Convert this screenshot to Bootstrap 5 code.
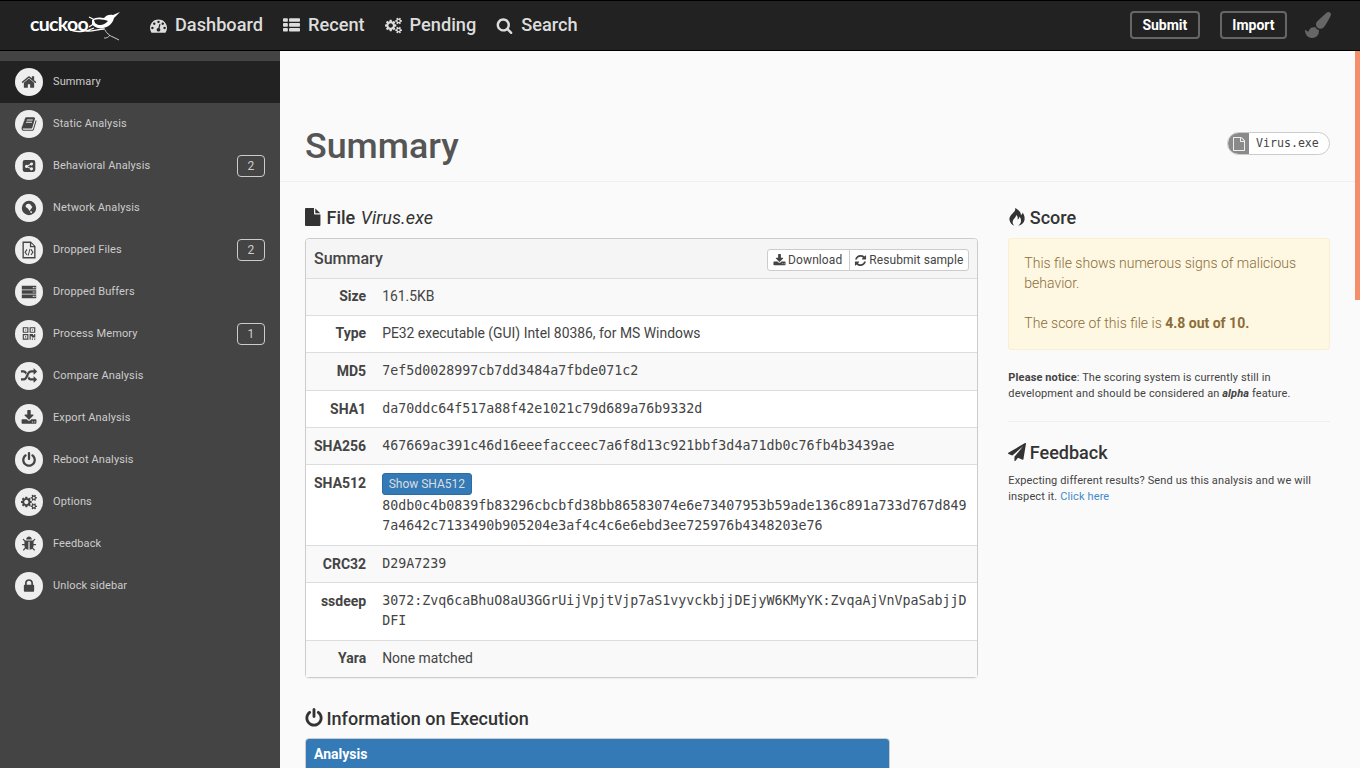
<!DOCTYPE html>
<html lang="en">
<head>
<meta charset="utf-8">
<title>Summary</title>
<link href="https://cdn.jsdelivr.net/npm/bootstrap@5.3.0/dist/css/bootstrap.min.css" rel="stylesheet">
<style>
html,body{height:100%}
body{font-family:Roboto,"Liberation Sans",sans-serif;font-size:14px;line-height:20.3px;color:#444;background:#fafafa;overflow:hidden}
.fa{fill:currentColor;flex:none}
.topbar{height:51px;background:#222;border-top:1px solid #000;border-bottom:1px solid #000;padding:0 29px 1px 30px}
.logo-box{width:92px;height:34px;position:relative;margin-right:28px}
.logo-word{position:absolute;left:0;top:5px;font-family:Lato,"Open Sans",sans-serif;font-weight:700;font-size:19.500px;line-height:22px;letter-spacing:-.7px;color:#fff}
.logo-bird{position:absolute;left:0;top:0}
.top-link{font-size:18.200px;font-weight:500;color:#ddd;text-decoration:none;line-height:24px;margin-right:20px}
.top-link .fa{width:17px;height:17px;margin-right:8px}
.top-btn{font-size:14px;font-weight:700;color:#fff;border:2px solid #666;border-radius:4px;height:28px;line-height:24px;padding:0 10.500px;text-decoration:none;margin-right:20px}
.brush-ic{width:26px;height:26px;color:#666;margin-left:-2px}
.shell{height:717px}
.side{width:280px;flex:none;background:#444;padding-top:10px}
.side-item{height:42px;padding:0 15px;color:#ccc;font-size:11px;letter-spacing:.12px;text-decoration:none}
.side-item.on{background:#222}
.side-disc{width:28px;height:28px;border-radius:50%;background:#eee;color:#444;margin-right:10px;flex:none}
.side-disc .fa{width:16px;height:16px}
.side-disc .fa.ic-tall{width:18px;height:18px}
.side-count{width:28px;height:22px;border:1px solid #ccc;border-radius:4px;color:#ccc;font-size:12px;line-height:20px;text-align:center;margin-left:auto}
.work{position:relative;overflow:hidden;background:#fafafa}
.thumb{position:absolute;right:0;top:0;width:5px;height:249px;background:#f58e6b}
.page-top{height:131px;border-bottom:1px solid #eee;padding:0 30px 0 25px}
.page-title{font-size:35.800px;line-height:40px;font-weight:500;color:#555;margin:0 0 15px}
.file-pill{height:23px;margin-bottom:26px;border:1px solid #ccc;border-radius:12px;background:#fff;overflow:hidden;width:103px;font-family:"DejaVu Sans Mono",monospace;font-size:11.600px;color:#444}
.file-pill-ic{width:21px;height:100%;background:#8a8a8a;color:#eee}
.file-pill-ic .fa{width:14px;height:14px}
.file-pill-tx{padding-left:7px;line-height:21px}
.page-body{padding:25px 30px 0 25px}
.page-body .row{--bs-gutter-x:30px}
.sec-head{font-size:18px;font-weight:500;line-height:22px;color:#333;margin:0 0 9px}
.sec-head em{font-weight:400;margin-left:1px;letter-spacing:.1px}
.sec-head .fa{width:18px;height:18px;margin-top:-4px;margin-right:-1px;vertical-align:middle}
.sec-head .fa.ic-big{width:20px;height:20px;margin-left:-1px;margin-right:-2px;margin-top:-5px}
.sec-head.run-title{margin-bottom:8px}
.sheet{border:1px solid #ccc;border-radius:4px;background:#fff;box-shadow:0 1px 1px rgba(0,0,0,.05);margin-bottom:30px}
.sheet-head{height:39.700px;padding:2px 8px 0;background:#f5f5f5;border-bottom:1px solid #ddd;border-radius:3px 3px 0 0;font-size:16px;font-weight:500;color:#444}
.sheet-head .btn-group{margin-top:2px;--bs-border-radius:3px}
.mini-btn{font-size:12px;line-height:16px;padding:2px 5px;color:#444;background:#fff;border-color:#ccc;--bs-btn-border-radius:3px}
.mini-btn .fa{width:13px;height:13px;margin-top:-2px;margin-right:-1px;vertical-align:middle}
.mini-wide{letter-spacing:.1px;padding-left:5.500px;padding-right:6.500px}
.mini-long{letter-spacing:.07px;padding-left:4.500px}
.facts{margin:0;color:#444;--bs-table-bg:transparent}
.facts tr{border:0}
.facts th,.facts td{padding:8px;border-bottom:1px solid #ddd;line-height:20.3px;box-shadow:none;color:#444;font-size:13.900px}
.facts tr:last-child th,.facts tr:last-child td{border-bottom:0}
.facts tr:nth-child(odd) th,.facts tr:nth-child(odd) td{background:#f9f9f9}
.facts th{width:68px;text-align:right;font-weight:700;white-space:nowrap;font-size:14px}
.facts tr.top-al th{vertical-align:top}
.facts tr.lift th,.facts tr.lift td{padding-top:7px;padding-bottom:9px}
.facts .hashy{font-family:"DejaVu Sans Mono",monospace;font-size:13.300px;word-break:break-all}
.show-btn{background:#337ab7;border:1px solid #2e6da4;color:#ddd;font-family:Roboto,sans-serif;font-size:12px;line-height:18px;padding:1px 5.500px;border-radius:3px;display:block;width:fit-content;text-decoration:none;margin-bottom:1px}
.run-sheet{width:585px;border-radius:4px 4px 0 0;overflow:hidden}
.run-head{height:30px;background:#337ab7;color:#fff;font-size:14px;font-weight:700;line-height:30px;padding:0 8px}
.warn-box{height:112px;background:#fef7e1;border:1px solid #fbeed5;border-radius:3px;color:#8a6d3b;padding:14px 15px;margin-bottom:20px;font-weight:300;line-height:20px}
.warn-box b{font-weight:700}
.fine{font-size:11px;line-height:16px;color:#444;letter-spacing:.12px}
.fine a{color:#428bca;text-decoration:none}
.fine b{font-weight:700}
.rule{border-top:1px solid #eee;opacity:1;margin:19px 0 20px}
</style>
</head>
<body>
<svg width="0" height="0" class="position-absolute">
<defs>
<symbol id="i-home" viewBox="0 0 1792 1792"><path d="M1472 992v480q0 26-19 45t-45 19h-384v-384h-256v384h-384q-26 0-45-19t-19-45v-480q0-1 .5-3t.5-3l575-474 575 474q1 2 1 6zm223-69l-62 74q-8 9-21 11h-3q-13 0-21-7l-692-577-692 577q-12 8-24 7-13-2-21-11l-62-74q-8-10-7-23.5t11-21.5l719-599q32-26 76-26t76 26l244 204v-195q0-14 9-23t23-9h192q14 0 23 9t9 23v408l219 182q10 8 11 21.5t-7 23.5z"/></symbol>
<symbol id="i-file" viewBox="0 0 1792 1792"><path d="M1024 512v-472q22 14 36 28l408 408q14 14 28 36h-472zm-128 32q0 40 28 68t68 28h544v1056q0 40-28 68t-68 28h-1344q-40 0-68-28t-28-68v-1600q0-40 28-68t68-28h800v544z"/></symbol>
<symbol id="i-file-o" viewBox="0 0 1792 1792"><path d="M1596 380q28 28 48 76t20 88v1152q0 40-28 68t-68 28h-1344q-40 0-68-28t-28-68v-1600q0-40 28-68t68-28h896q40 0 88 20t76 48zm-444-244v376h376q-10-29-22-41l-313-313q-12-12-41-22zm384 1528v-1024h-416q-40 0-68-28t-28-68v-416h-768v1536h1280z"/></symbol>
<symbol id="i-power" viewBox="0 0 1792 1792"><path d="M1664 896q0 156-61 298t-164 245-245 164-298 61-298-61-245-164-164-245-61-298q0-182 80.5-343t226.5-270q43-32 95.5-25t83.5 50q32 42 24.5 94.5t-49.5 84.5q-98 74-151.5 181t-53.5 228q0 104 40.5 198.5t109.5 163.5 163.5 109.5 198.5 40.5 198.5-40.5 163.5-109.5 109.5-163.5 40.5-198.5q0-121-53.5-228t-151.5-181q-42-32-49.5-84.5t24.5-94.5q31-43 84-50t95 25q146 109 226.5 270t80.5 343zm-640-768v640q0 52-38 90t-90 38-90-38-38-90v-640q0-52 38-90t90-38 90 38 38 90z"/></symbol>
<symbol id="i-lock" viewBox="0 0 1792 1792"><path d="M640 768h512v-192q0-106-75-181t-181-75-181 75-75 181v192zm832 96v576q0 40-28 68t-68 28h-960q-40 0-68-28t-28-68v-576q0-40 28-68t68-28h32v-192q0-184 132-316t316-132 316 132 132 316v192h32q40 0 68 28t28 68z"/></symbol>
<symbol id="i-download" viewBox="0 0 1792 1792"><path d="M1344 1344q0-26-19-45t-45-19-45 19-19 45 19 45 45 19 45-19 19-45zm256 0q0-26-19-45t-45-19-45 19-19 45 19 45 45 19 45-19 19-45zm128-224v320q0 40-28 68t-68 28h-1472q-40 0-68-28t-28-68v-320q0-40 28-68t68-28h465l135 136q58 56 136 56t136-56l136-136h464q40 0 68 28t28 68zm-325-569q17 41-14 70l-448 448q-18 19-45 19t-45-19l-448-448q-31-29-14-70 17-39 59-39h256v-448q0-26 19-45t45-19h256q26 0 45 19t19 45v448h256q42 0 59 39z"/></symbol>
<symbol id="i-search" viewBox="0 0 1792 1792"><path d="M1216 832q0-185-131.5-316.5t-316.5-131.5-316.5 131.5-131.5 316.5 131.5 316.5 316.5 131.5 316.5-131.5 131.5-316.5zm512 832q0 52-38 90t-90 38q-54 0-90-38l-343-342q-179 124-399 124-143 0-273.5-55.5t-225-150-150-225-55.5-273.5 55.5-273.5 150-225 225-150 273.5-55.5 273.5 55.5 225 150 150 225 55.5 273.5q0 220-124 399l343 343q37 37 37 90z"/></symbol>
<symbol id="i-list" viewBox="0 0 1792 1792"><path d="M512 1248v192q0 40-28 68t-68 28h-320q-40 0-68-28t-28-68v-192q0-40 28-68t68-28h320q40 0 68 28t28 68zm0-512v192q0 40-28 68t-68 28h-320q-40 0-68-28t-28-68v-192q0-40 28-68t68-28h320q40 0 68 28t28 68zm1280 512v192q0 40-28 68t-68 28h-960q-40 0-68-28t-28-68v-192q0-40 28-68t68-28h960q40 0 68 28t28 68zm-1280-1024v192q0 40-28 68t-68 28h-320q-40 0-68-28t-28-68v-192q0-40 28-68t68-28h320q40 0 68 28t28 68zm1280 512v192q0 40-28 68t-68 28h-960q-40 0-68-28t-28-68v-192q0-40 28-68t68-28h960q40 0 68 28t28 68zm0-512v192q0 40-28 68t-68 28h-960q-40 0-68-28t-28-68v-192q0-40 28-68t68-28h960q40 0 68 28t28 68z"/></symbol>
<symbol id="i-random" viewBox="0 0 1792 1792"><path d="M666 481q-60 92-137 273-22-45-37-72.5t-40.5-63.5-51-56.5-63-35-81.5-14.5h-224q-14 0-23-9t-9-23v-192q0-14 9-23t23-9h224q250 0 410 225zm1126 799q0 14-9 23l-320 320q-9 9-23 9-13 0-22.5-9.5t-9.5-22.5v-192q-32 0-85 .5t-81 1-73-1-71-5-64-10.5-63-18.5-58-28.5-59-40-55-53.5-56-69.5q59-93 136-273 22 45 37 72.5t40.5 63.5 51 56.5 63 35 81.5 14.5h256v-192q0-14 9-23t23-9q12 0 24 10l319 319q9 9 9 23zm0-896q0 14-9 23l-320 320q-9 9-23 9-13 0-22.5-9.5t-9.5-22.5v-192h-256q-48 0-87 15t-69 45-51 61.5-45 77.5q-32 62-78 171-29 66-49.5 111t-54 105-64 100-74 83-90 68.5-106.5 42-128 16.5h-224q-14 0-23-9t-9-23v-192q0-14 9-23t23-9h224q48 0 87-15t69-45 51-61.5 45-77.5q32-62 78-171 29-66 49.5-111t54-105 64-100 74-83 90-68.5 106.5-42 128-16.5h256v-192q0-14 9-23t23-9q12 0 24 10l319 319q9 9 9 23z"/></symbol>
<symbol id="i-refresh" viewBox="0 0 1792 1792"><path d="M1639 1056q0 5-1 7-64 268-268 434.5t-478 166.5q-146 0-282.5-55t-243.5-157l-129 129q-19 19-45 19t-45-19-19-45v-448q0-26 19-45t45-19h448q26 0 45 19t19 45-19 45l-137 137q71 66 161 102t187 36q134 0 250-65t186-179q11-17 53-117 8-23 30-23h192q13 0 22.5 9.5t9.5 22.5zm25-800v448q0 26-19 45t-45 19h-448q-26 0-45-19t-19-45 19-45l138-138q-148-137-349-137-134 0-250 65t-186 179q-11 17-53 117-8 23-30 23h-199q-13 0-22.5-9.5t-9.5-22.5v-7q65-268 270-434.5t480-166.5q146 0 284 55.5t245 156.5l130-129q19-19 45-19t45 19 19 45z"/></symbol>
<symbol id="i-plane" viewBox="0 0 1792 1792"><path d="M1764 11q33 24 27 64l-256 1536q-5 29-32 45-14 8-31 8-11 0-24-5l-453-185-242 295q-18 23-49 23-13 0-22-4-19-7-30.5-23.5t-11.5-36.5v-349l864-1059-1069 925-395-162q-37-14-40-55-2-40 32-59l1664-960q15-9 32-9 20 0 36 11z"/></symbol>
<symbol id="i-qr" viewBox="0 0 1792 1792"><path d="M576 1152v128h-128v-128h128zm0-768v128h-128v-128h128zm768 0v128h-128v-128h128zm-1024 1023h384v-383h-384v383zm0-767h384v-384h-384v384zm768 0h384v-384h-384v384zm-256 256v640h-640v-640h640zm512 512v128h-128v-128h128zm256 0v128h-128v-128h128zm0-512v384h-384v-128h-128v384h-128v-640h384v128h128v-128h128zm-768-768v640h-640v-640h640zm768 0v640h-640v-640h640z"/></symbol>
<symbol id="i-cogs" viewBox="0 0 1920 1792"><path d="M896 896q0-106-75-181t-181-75-181 75-75 181 75 181 181 75 181-75 75-181zm768 512q0-52-38-90t-90-38-90 38-38 90q0 53 37.5 90.5t90.5 37.5 90.5-37.5 37.5-90.5zm0-1024q0-52-38-90t-90-38-90 38-38 90q0 53 37.5 90.5t90.5 37.5 90.5-37.5 37.5-90.5zm-384 421v185q0 10-7 19.5t-16 10.5l-155 24q-11 35-32 76 34 48 90 115 7 11 7 20 0 12-7 19-23 30-82.5 89.5t-78.5 59.5q-11 0-21-7l-115-90q-37 19-77 31-11 108-23 155-7 24-30 24h-186q-11 0-20-7.5t-10-17.5l-23-153q-34-10-75-31l-118 89q-7 7-20 7-11 0-21-8-144-133-144-160 0-9 7-19 10-14 41-53t47-61q-23-44-35-82l-152-24q-10-1-17-9.5t-7-19.5v-185q0-10 7-19.5t16-10.5l155-24q11-35 32-76-34-48-90-115-7-11-7-20 0-12 7-20 22-30 82-89t79-59q11 0 21 7l115 90q34-18 77-32 11-108 23-154 7-24 30-24h186q11 0 20 7.5t10 17.5l23 153q34 10 75 31l118-89q8-7 20-7 11 0 21 8 144 133 144 160 0 8-7 19-12 16-42 54t-45 60q23 48 34 82l152 23q10 2 17 10.5t7 19.5zm640 533v140q0 16-149 31-12 27-30 52 51 113 51 138 0 4-4 7-122 71-124 71-8 0-46-47t-52-68q-20 2-30 2t-30-2q-14 21-52 68t-46 47q-2 0-124-71-4-3-4-7 0-25 51-138-18-25-30-52-149-15-149-31v-140q0-16 149-31 13-29 30-52-51-113-51-138 0-4 4-7 4-2 35-20t59-34 30-16q8 0 46 46.5t52 67.5q20-2 30-2t30 2q51-71 92-112l6-2q4 0 124 70 4 3 4 7 0 25-51 138 17 23 30 52 149 15 149 31zm0-1024v140q0 16-149 31-12 27-30 52 51 113 51 138 0 4-4 7-122 71-124 71-8 0-46-47t-52-68q-20 2-30 2t-30-2q-14 21-52 68t-46 47q-2 0-124-71-4-3-4-7 0-25 51-138-18-25-30-52-149-15-149-31v-140q0-16 149-31 13-29 30-52-51-113-51-138 0-4 4-7 4-2 35-20t59-34 30-16q8 0 46 46.5t52 67.5q20-2 30-2t30 2q51-71 92-112l6-2q4 0 124 70 4 3 4 7 0 25-51 138 17 23 30 52 149 15 149 31z"/></symbol>
<symbol id="i-brush" viewBox="0 0 1792 1792"><path d="M1615 0q70 0 122.5 46.5t52.5 116.5q0 63-45 151-332 629-465 752-97 91-218 91-126 0-216.5-92.5t-90.5-219.5q0-128 92-212l638-579q59-54 130-54zm-909 1034q39 76 106.5 130t150.5 76l1 71q4 213-129.5 347t-348.5 134q-123 0-218-46.5t-152.5-127.5-86.5-183-29-220q7 5 41 30t62 44.5 59 36.5 46 17q41 0 55-37 25-66 57.5-112.5t69.5-76 88-47.5 103-25.5 125-10.5z"/></symbol>
<symbol id="i-bug" viewBox="0 0 1792 1792"><path d="M1696 960q0 26-19 45t-45 19h-224q0 171-67 290l208 209q19 19 19 45t-19 45q-18 19-45 19t-45-19l-198-197q-5 5-15 13t-42 28.5-65 36.5-82 29-97 13v-896h-128v896q-51 0-101.5-13.5t-87-33-66-39-43.5-32.5l-15-14-183 207q-20 21-48 21-24 0-43-16-19-18-20.5-44.5t15.5-46.5l202-227q-58-114-58-274h-224q-26 0-45-19t-19-45 19-45 45-19h224v-294l-173-173q-19-19-19-45t19-45 45-19 45 19l173 173h844l173-173q19-19 45-19t45 19 19 45-19 45l-173 173v294h224q26 0 45 19t19 45zm-480-576h-640q0-133 93.5-226.5t226.5-93.5 226.5 93.5 93.5 226.5z"/></symbol>
<symbol id="i-book" viewBox="0 0 1792 1792"><path d="M1703 478q40 57 18 129l-275 906q-19 64-76.5 107.5t-122.5 43.5h-923q-77 0-148.5-53.5t-99.5-131.5q-24-67-2-127 0-4 3-27t4-37q1-8-3-21.5t-3-19.5q2-11 8-21t16.5-23.5 16.5-23.5q23-38 45-91.5t30-91.5q3-10 .5-30t-.5-28q3-11 17-28t17-23q21-36 42-92t25-90q1-9-2.5-32t.5-28q4-13 22-30.5t22-22.5q19-26 42.5-84.5t27.5-96.5q1-8-3-25.5t-2-26.5q2-8 9-18t18-23 17-21q8-12 16.5-30.5t15-35 16-36 19.5-32 26.5-23.5 36-11.5 47.5 5.5l-1 3q38-9 51-9h761q74 0 114 56t18 130l-274 906q-36 119-71.5 153.5t-128.5 34.5h-869q-27 0-38 15-11 16-1 43 24 70 144 70h923q29 0 56-15.5t35-41.5l300-987q7-22 5-57 38 15 59 43zm-1064 2q-4 13 2 22.5t20 9.5h608q13 0 25.5-9.5t16.5-22.5l21-64q4-13-2-22.5t-20-9.5h-608q-13 0-25.5 9.5t-16.5 22.5zm-83 256q-4 13 2 22.5t20 9.5h608q13 0 25.5-9.5t16.5-22.5l21-64q4-13-2-22.5t-20-9.5h-608q-13 0-25.5 9.5t-16.5 22.5z"/></symbol>
<symbol id="i-gauge" viewBox="0 0 1792 1792"><path d="M384 1152q0-53-37.5-90.5t-90.5-37.5-90.5 37.5-37.5 90.5 37.5 90.5 90.5 37.5 90.5-37.5 37.5-90.5zm192-448q0-53-37.5-90.5t-90.5-37.5-90.5 37.5-37.5 90.5 37.5 90.5 90.5 37.5 90.5-37.5 37.5-90.5zm428 481l101-382q6-26-7.5-48.5t-38.5-29.5-48 6.5-30 39.5l-101 382q-60 5-107 43.5t-63 98.5q-20 77 20 146t117 89 146-20 89-117q16-60-6-117t-72-91zm660-33q0-53-37.5-90.5t-90.5-37.5-90.5 37.5-37.5 90.5 37.5 90.5 90.5 37.5 90.5-37.5 37.5-90.5zm-640-640q0-53-37.5-90.5t-90.5-37.5-90.5 37.5-37.5 90.5 37.5 90.5 90.5 37.5 90.5-37.5 37.5-90.5zm448 192q0-53-37.5-90.5t-90.5-37.5-90.5 37.5-37.5 90.5 37.5 90.5 90.5 37.5 90.5-37.5 37.5-90.5zm320 448q0 261-141 483-19 29-54 29h-1402q-35 0-54-29-141-221-141-483 0-182 71-348t191-286 286-191 348-71 348 71 286 191 191 286 71 348z"/></symbol>
<symbol id="i-share" viewBox="-1.500 -1.500 19 19"><path fill-rule="evenodd" d="M3 1h10a2.500 2.500 0 0 1 2.500 2.500v9A2.500 2.500 0 0 1 13 15H3a2.500 2.500 0 0 1-2.500-2.500v-9A2.500 2.500 0 0 1 3 1zm8 2.700a1.800 1.800 0 0 0-1.780 2.070L6.300 7.200a1.800 1.800 0 1 0 0 2.600l2.920 1.430a1.800 1.800 0 1 0 .5-1.100L6.900 8.750a1.800 1.800 0 0 0 0-.5L9.720 6.870A1.800 1.800 0 1 0 11 3.700z"/></symbol>
<symbol id="i-globe" viewBox="0 0 16 16"><path fill-rule="evenodd" d="M8 .8a7.200 7.200 0 1 1 0 14.400A7.200 7.200 0 0 1 8 .8zM4.500 5.800c.1 1.200 1 2 2 2.300.3.800.7 1.300 1.400 1.600.1.600.3 1 .8 1.200.3-.8.800-1.200 1.200-1.900.6-.7 1.300-1.200 1.400-2.300-.6-.2-1-.7-1.200-1.400-.4-.8-.8-1.200-1.500-1.400-1-.3-2.400-.1-3.200.7-.4.400-.7 1-.9 1.700zM10.700 11.400a.9.900 0 1 0 .1.100z"/></symbol>
<symbol id="i-server" viewBox="0 0 16 16"><path fill-rule="evenodd" d="M.8 1.800h14.400v3.600H.8zm11 1.200v1.200h1V3zm1.700 0v1.200h1V3zM.8 6.200h14.400v3.600H.8zm11 1.200v1.200h1V7.400zm1.700 0v1.200h1V7.400zM.8 10.600h14.400v3.600H.8zm11 1.200V13h1v-1.200zm1.700 0V13h1v-1.200z"/></symbol>
<symbol id="i-code" viewBox="0 0 16 16"><path fill-rule="evenodd" d="M2.200 .5h7.500l4.100 4.100v10.900H2.200zm1.200 1.200v12.600h9.200V5.500H8.800V1.700zM10 2.100v2.300h2.300zM5.900 7.200l.7.700-1.500 2 1.500 2-.7.7-2-2.700zm4.200 0l2 2.700-2 2.700-.7-.7 1.500-2-1.500-2zM8.500 6.800l.8.200-1.700 6-.8-.2z"/></symbol>
<symbol id="i-fire" viewBox="0 0 16 18"><path d="M6 0C7 2.500 5 4 3.500 5.500 1.500 7.500 0 9.500.5 12 1 15 3 17 5.500 17.800 3.500 15.500 3 13.500 4.500 11.500 5.500 10 7 9 7.300 7 8.800 8.500 9 10 8.500 11.500 10 11 10.500 9.500 10.500 8.500 12 10.500 12.500 13 11.500 15 11 16.200 10 17.200 9 17.800 12.500 17 15 15 15.500 12 16 9 15 6.500 13.500 4.500 13.500 5.500 13 6.500 12 7 12 4 9 1.500 6 0z"/></symbol>
</defs>
</svg>

<nav class="topbar d-flex align-items-center">
  <a class="logo-box d-block text-decoration-none" href="#">
    <svg class="logo-bird" width="92" height="34" viewBox="0 0 92 34" aria-hidden="true">
      <g transform="translate(-30 -8)">
        <path d="M70 30C78 33 88 31 94 28M86 31C92 32 98 29 104 29" fill="none" stroke="#fff" stroke-width="1.300"/>
        <path d="M104 28C106 33 110 36 113 37 115 38 117 39 119 40M110 35C108 38 106 38 104 38" fill="none" stroke="#ccc" stroke-width="1"/>
        <path d="M89 17L95 20M89 27L95 23" fill="none" stroke="#fff" stroke-width="1.200"/>
        <path d="M92 20C95 17 100 17 104 18 106 15 110 14 113 15L120 12 114 18C113 23 109 27 103 28 98 29 94 27 92 24z" fill="#fff"/>
        <path d="M94 20C98 18.500 104 19.500 108 21 104 26 98 26 95 23z" fill="#222"/>
      </g>
    </svg>
    <span class="logo-word">cuckoo</span>
  </a>
  <a class="top-link d-flex align-items-center" href="#"><svg class="fa"><use href="#i-gauge"/></svg>Dashboard</a>
  <a class="top-link d-flex align-items-center" href="#"><svg class="fa"><use href="#i-list"/></svg>Recent</a>
  <a class="top-link d-flex align-items-center" href="#"><svg class="fa"><use href="#i-cogs"/></svg>Pending</a>
  <a class="top-link d-flex align-items-center" href="#"><svg class="fa"><use href="#i-search"/></svg>Search</a>
  <a class="top-btn ms-auto" href="#">Submit</a>
  <a class="top-btn" href="#">Import</a>
  <svg class="fa brush-ic"><use href="#i-brush"/></svg>
</nav>

<div class="shell d-flex">
  <aside class="side">
    <a class="side-item on d-flex align-items-center" href="#"><span class="side-disc d-flex align-items-center justify-content-center"><svg class="fa"><use href="#i-home"/></svg></span>Summary</a>
    <a class="side-item d-flex align-items-center" href="#"><span class="side-disc d-flex align-items-center justify-content-center"><svg class="fa"><use href="#i-book"/></svg></span>Static Analysis</a>
    <a class="side-item d-flex align-items-center" href="#"><span class="side-disc d-flex align-items-center justify-content-center"><svg class="fa"><use href="#i-share"/></svg></span>Behavioral Analysis<span class="side-count">2</span></a>
    <a class="side-item d-flex align-items-center" href="#"><span class="side-disc d-flex align-items-center justify-content-center"><svg class="fa"><use href="#i-globe"/></svg></span>Network Analysis</a>
    <a class="side-item d-flex align-items-center" href="#"><span class="side-disc d-flex align-items-center justify-content-center"><svg class="fa ic-tall"><use href="#i-code"/></svg></span>Dropped Files<span class="side-count">2</span></a>
    <a class="side-item d-flex align-items-center" href="#"><span class="side-disc d-flex align-items-center justify-content-center"><svg class="fa"><use href="#i-server"/></svg></span>Dropped Buffers</a>
    <a class="side-item d-flex align-items-center" href="#"><span class="side-disc d-flex align-items-center justify-content-center"><svg class="fa"><use href="#i-qr"/></svg></span>Process Memory<span class="side-count">1</span></a>
    <a class="side-item d-flex align-items-center" href="#"><span class="side-disc d-flex align-items-center justify-content-center"><svg class="fa"><use href="#i-random"/></svg></span>Compare Analysis</a>
    <a class="side-item d-flex align-items-center" href="#"><span class="side-disc d-flex align-items-center justify-content-center"><svg class="fa"><use href="#i-download"/></svg></span>Export Analysis</a>
    <a class="side-item d-flex align-items-center" href="#"><span class="side-disc d-flex align-items-center justify-content-center"><svg class="fa"><use href="#i-power"/></svg></span>Reboot Analysis</a>
    <a class="side-item d-flex align-items-center" href="#"><span class="side-disc d-flex align-items-center justify-content-center"><svg class="fa"><use href="#i-cogs"/></svg></span>Options</a>
    <a class="side-item d-flex align-items-center" href="#"><span class="side-disc d-flex align-items-center justify-content-center"><svg class="fa"><use href="#i-bug"/></svg></span>Feedback</a>
    <a class="side-item d-flex align-items-center" href="#"><span class="side-disc d-flex align-items-center justify-content-center"><svg class="fa"><use href="#i-lock"/></svg></span>Unlock sidebar</a>
  </aside>

  <main class="work flex-grow-1">
    <div class="thumb"></div>
    <header class="page-top d-flex align-items-end justify-content-between">
      <h1 class="page-title">Summary</h1>
      <div class="file-pill d-flex">
        <span class="file-pill-ic d-flex align-items-center justify-content-center"><svg class="fa"><use href="#i-file-o"/></svg></span>
        <span class="file-pill-tx">Virus.exe</span>
      </div>
    </header>
    <div class="page-body">
      <div class="row">
        <div class="col-8">
          <h2 class="sec-head"><svg class="fa"><use href="#i-file"/></svg> File <em>Virus.exe</em></h2>
          <section class="sheet">
            <div class="sheet-head d-flex align-items-center justify-content-between">
              <span>Summary</span>
              <div class="btn-group">
                <a class="btn mini-btn mini-wide" href="#"><svg class="fa"><use href="#i-download"/></svg> Download</a>
                <a class="btn mini-btn mini-long" href="#"><svg class="fa"><use href="#i-refresh"/></svg> Resubmit sample</a>
              </div>
            </div>
            <table class="table facts">
              <tbody>
                <tr class="lift"><th>Size</th><td>161.5KB</td></tr>
                <tr class="lift"><th>Type</th><td>PE32 executable (GUI) Intel 80386, for MS Windows</td></tr>
                <tr><th>MD5</th><td class="hashy">7ef5d0028997cb7dd3484a7fbde071c2</td></tr>
                <tr><th>SHA1</th><td class="hashy">da70ddc64f517a88f42e1021c79d689a76b9332d</td></tr>
                <tr><th>SHA256</th><td class="hashy">467669ac391c46d16eeefacceec7a6f8d13c921bbf3d4a71db0c76fb4b3439ae</td></tr>
                <tr class="top-al"><th>SHA512</th><td class="hashy"><a class="show-btn" href="#">Show SHA512</a>80db0c4b0839fb83296cbcbfd38bb86583074e6e73407953b59ade136c891a733d767d8497a4642c7133490b905204e3af4c4c6e6ebd3ee725976b4348203e76</td></tr>
                <tr><th>CRC32</th><td class="hashy">D29A7239</td></tr>
                <tr class="top-al"><th>ssdeep</th><td class="hashy">3072:Zvq6caBhuO8aU3GGrUijVpjtVjp7aS1vyvckbjjDEjyW6KMyYK:ZvqaAjVnVpaSabjjDDFI</td></tr>
                <tr class="lift"><th>Yara</th><td>None matched</td></tr>
              </tbody>
            </table>
          </section>
          <h2 class="sec-head run-title"><svg class="fa ic-big"><use href="#i-power"/></svg> Information on Execution</h2>
          <section class="sheet run-sheet"><div class="run-head">Analysis</div></section>
        </div>
        <div class="col-4">
          <h2 class="sec-head"><svg class="fa"><use href="#i-fire"/></svg> Score</h2>
          <div class="warn-box">This file shows numerous signs of malicious behavior.<br><br>The score of this file is <b>4.8 out of 10.</b></div>
          <p class="fine mb-0"><b>Please notice</b>: The scoring system is currently still in development and should be considered an <b><i>alpha</i></b> feature.</p>
          <hr class="rule">
          <h2 class="sec-head"><svg class="fa"><use href="#i-plane"/></svg> Feedback</h2>
          <p class="fine mb-0">Expecting different results? Send us this analysis and we will inspect it. <a href="#">Click here</a></p>
        </div>
      </div>
    </div>
  </main>
</div>
<script src="https://cdn.jsdelivr.net/npm/bootstrap@5.3.0/dist/js/bootstrap.bundle.min.js"></script>
</body>
</html>
